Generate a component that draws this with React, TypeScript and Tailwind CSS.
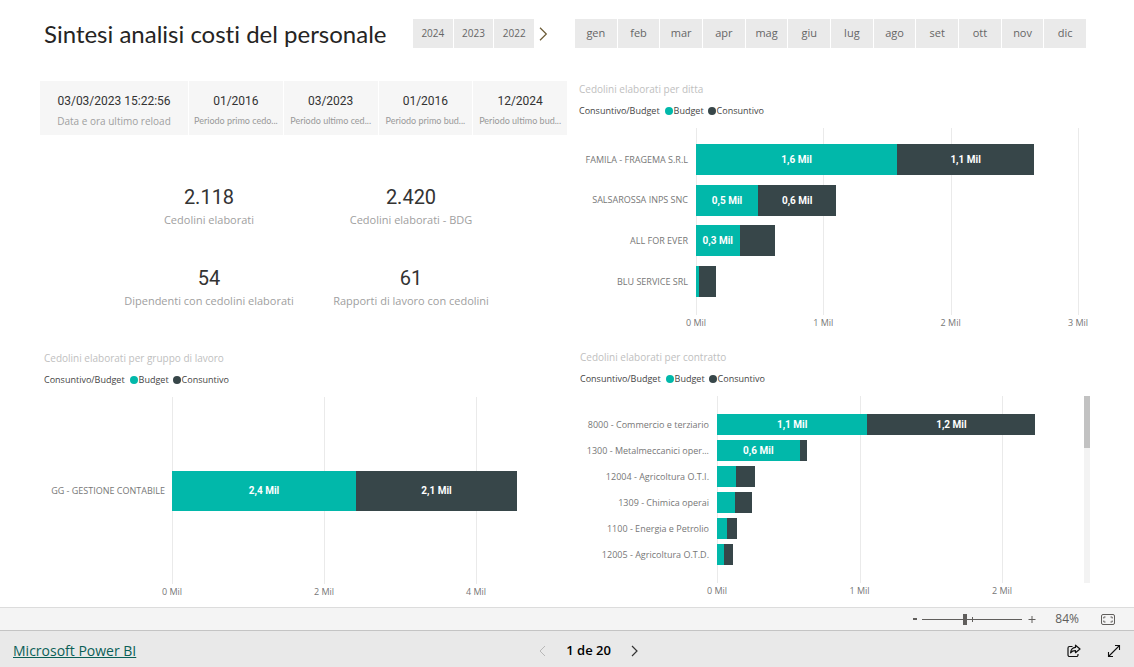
import { useState } from "react";

type Bar = {
  label: string;
  budget: number;
  actual: number;
  budgetText?: string;
  actualText?: string;
};

const YEARS = ["2024", "2023", "2022"];

const MONTHS = [
  "gen",
  "feb",
  "mar",
  "apr",
  "mag",
  "giu",
  "lug",
  "ago",
  "set",
  "ott",
  "nov",
  "dic",
];

const PERIODS = [
  { value: "01/2016", label: "Periodo primo cedo..." },
  { value: "03/2023", label: "Periodo ultimo ced..." },
  { value: "01/2016", label: "Periodo primo bud..." },
  { value: "12/2024", label: "Periodo ultimo bud..." },
];

const KPIS = [
  { value: "2.118", label: "Cedolini elaborati" },
  { value: "2.420", label: "Cedolini elaborati - BDG" },
  { value: "54", label: "Dipendenti con cedolini elaborati" },
  { value: "61", label: "Rapporti di lavoro con cedolini" },
];

const COMPANIES: Bar[] = [
  { label: "FAMILA - FRAGEMA S.R.L", budget: 1.58, actual: 1.075, budgetText: "1,6 Mil", actualText: "1,1 Mil" },
  { label: "SALSAROSSA INPS SNC", budget: 0.487, actual: 0.615, budgetText: "0,5 Mil", actualText: "0,6 Mil" },
  { label: "ALL FOR EVER", budget: 0.342, actual: 0.28, budgetText: "0,3 Mil" },
  { label: "BLU SERVICE SRL", budget: 0.025, actual: 0.135 },
];

const GROUPS: Bar[] = [
  { label: "GG - GESTIONE CONTABILE", budget: 2.42, actual: 2.12, budgetText: "2,4 Mil", actualText: "2,1 Mil" },
];

const CONTRACTS: Bar[] = [
  { label: "8000 - Commercio e terziario", budget: 1.055, actual: 1.18, budgetText: "1,1 Mil", actualText: "1,2 Mil" },
  { label: "1300 - Metalmeccanici oper...", budget: 0.58, actual: 0.055, budgetText: "0,6 Mil" },
  { label: "12004 - Agricoltura O.T.I.", budget: 0.132, actual: 0.135 },
  { label: "1309 - Chimica operai", budget: 0.125, actual: 0.12 },
  { label: "1100 - Energia e Petrolio", budget: 0.07, actual: 0.07 },
  { label: "12005 - Agricoltura O.T.D.", budget: 0.048, actual: 0.067 },
];

function ChartHeading({ title }: { title: string }) {
  return (
    <>
      <h2 className="text-[10px] leading-4 text-[#c0c0c0]">{title}</h2>
      <div className="mt-[6px] flex items-center text-[9px] leading-4 text-[#444]">
        <span className="mr-[5px]">Consuntivo/Budget</span>
        <span className="mr-px size-2 rounded-full bg-[#01b8aa]" />
        <span className="mr-1">Budget</span>
        <span className="mr-px size-2 rounded-full bg-[#374649]" />
        <span>Consuntivo</span>
      </div>
    </>
  );
}

function BarChart({
  bars,
  max,
  ticks,
  labelClass,
  barClass,
  bodyClass,
}: {
  bars: Bar[];
  max: number;
  ticks: number[];
  labelClass: string;
  barClass: string;
  bodyClass: string;
}) {
  return (
    <div className="mt-[9px] flex min-w-0 flex-1 text-[9px] text-[#777]">
      <div className={`flex h-[187px] shrink-0 flex-col ${labelClass} ${bodyClass}`}>
        {bars.map((bar) => (
          <div
            key={bar.label}
            className={`flex items-center justify-end whitespace-nowrap ${barClass}`}
          >
            {bar.label}
          </div>
        ))}
      </div>

      <div className="min-w-0 flex-1">
        <div className={`relative flex h-[187px] flex-col ${bodyClass}`}>
          {ticks.map((tick) => (
            <span
              key={tick}
              className="absolute inset-y-0 w-px bg-[#eaeaea]"
              style={{ left: `${(tick / max) * 100}%` }}
            />
          ))}
          {bars.map((bar) => (
            <div
              key={bar.label}
              className={`relative flex font-[Roboto,sans-serif] text-[10px] font-bold text-white ${barClass}`}
            >
              <div
                className="flex shrink-0 items-center justify-center bg-[#01b8aa]"
                style={{ width: `${(bar.budget / max) * 100}%` }}
              >
                {bar.budgetText}
              </div>
              <div
                className="flex shrink-0 items-center justify-center bg-[#374649]"
                style={{ width: `${(bar.actual / max) * 100}%` }}
              >
                {bar.actualText}
              </div>
            </div>
          ))}
        </div>
        <div className="relative h-4 leading-4">
          {ticks.map((tick) => (
            <span
              key={tick}
              className="absolute -translate-x-1/2 whitespace-nowrap"
              style={{ left: `${(tick / max) * 100}%` }}
            >
              {tick} Mil
            </span>
          ))}
        </div>
      </div>
    </div>
  );
}

export default function App() {
  const [zoom, setZoom] = useState(42);

  return (
    <div className="flex min-h-screen flex-col bg-white font-['Open_Sans','Noto_Sans',sans-serif]">
      <main className="grid flex-1 grid-cols-[minmax(0,527fr)_minmax(0,515fr)] gap-x-2 pt-[19px] pr-11 pb-[7px] pl-10">
        <section>
          <header className="flex h-[29px] items-center justify-between pr-[18px]">
            <h1 className="pl-1 font-[Lato,sans-serif] text-2xl whitespace-nowrap text-[#252423] [font-variant-ligatures:none]">
              Sintesi analisi costi del personale
            </h1>
            <div className="flex items-center gap-[5px]">
              <div className="flex w-[121px] gap-px">
                {YEARS.map((year) => (
                  <button
                    key={year}
                    type="button"
                    className="h-[29px] flex-1 bg-[#eaeaea] text-[10px] text-[#666]"
                  >
                    {year}
                  </button>
                ))}
              </div>
              <button type="button" aria-label="Anni precedenti">
                <svg width="10" height="14" viewBox="0 0 10 14" fill="none" stroke="#6b5a35" strokeWidth="1.2">
                  <path d="M1 0.8 7.300 7 1 13.200" />
                </svg>
              </button>
            </div>
          </header>

          <div className="mt-[33px] flex h-[54px] gap-px text-center">
            <div className="flex w-[148px] flex-col justify-center bg-[#f6f6f6] pt-[6px]">
              <div className="font-[Roboto,sans-serif] text-xs leading-5 text-[#333]">
                03/03/2023 15:22:56
              </div>
              <div className="text-[10px] leading-5 text-[#a0a0a0]">Data e ora ultimo reload</div>
            </div>
            {PERIODS.map((period) => (
              <div
                key={period.label}
                className="flex min-w-0 flex-1 flex-col justify-center bg-[#f6f6f6] pt-[6px]"
              >
                <div className="font-[Roboto,sans-serif] text-xs leading-5 text-[#333]">
                  {period.value}
                </div>
                <div className="font-[Lato,sans-serif] text-[9px] leading-5 whitespace-nowrap text-[#999]">
                  {period.label}
                </div>
              </div>
            ))}
          </div>

          <div className="mt-12 mr-[55px] ml-[68px] grid grid-cols-2 gap-y-9 text-center">
            {KPIS.map((kpi) => (
              <div key={kpi.label}>
                <div className="font-[Roboto,sans-serif] text-xl leading-7 text-[#333]">
                  {kpi.value}
                </div>
                <div className="mt-px text-[11px] leading-4 whitespace-nowrap text-[#a0a0a0]">
                  {kpi.label}
                </div>
              </div>
            ))}
          </div>

          <div className="mt-[41px] pl-1">
            <ChartHeading title="Cedolini elaborati per gruppo di lavoro" />
            <div className="flex pr-[91px]">
              <BarChart
                bars={GROUPS}
                max={4}
                ticks={[0, 2, 4]}
                labelClass="w-32 pr-[7px]"
                barClass="h-10"
                bodyClass="justify-center"
              />
            </div>
          </div>
        </section>

        <section>
          <div className="flex gap-px pr-1">
            {MONTHS.map((month) => (
              <button
                key={month}
                type="button"
                className="h-[29px] flex-1 bg-[#eaeaea] text-[11px] text-[#666]"
              >
                {month}
              </button>
            ))}
          </div>

          <div className="mt-[33px] pl-1">
            <ChartHeading title="Cedolini elaborati per ditta" />
            <div className="flex pr-3">
              <BarChart
                bars={COMPANIES}
                max={3}
                ticks={[0, 1, 2, 3]}
                labelClass="w-[117px] pr-2"
                barClass="h-[31px]"
                bodyClass="justify-between pt-4 pb-[18px]"
              />
            </div>
          </div>

          <div className="mt-[18px] pl-[5px]">
            <ChartHeading title="Cedolini elaborati per contratto" />
            <div className="flex">
              <BarChart
                bars={CONTRACTS}
                max={2}
                ticks={[0, 1, 2]}
                labelClass="w-[137px] pr-2"
                barClass="h-[21px]"
                bodyClass="justify-between py-[18px]"
              />
              <div className="mt-[9px] ml-[82px] h-[187px] w-[6px] bg-[#f3f3f3]">
                <div className="h-[52px] bg-[#c2c2c2]" />
              </div>
            </div>
          </div>
        </section>
      </main>

      <div className="flex h-[23px] items-center justify-end border-t border-[#dcdcdc] bg-[#f4f4f4] pr-[19px] text-[#605e5c]">
        <button type="button" aria-label="Riduci" onClick={() => setZoom(zoom - 5)}>
          <svg width="5" height="12" viewBox="0 0 5 12" stroke="currentColor" strokeWidth="2">
            <path d="M0 6h4" />
          </svg>
        </button>
        <div className="relative mx-1 flex w-[100px] items-center">
          <span className="absolute left-[50px] h-[5px] w-px bg-[#605e5c]" />
          <input
            type="range"
            aria-label="Zoom"
            min={0}
            max={100}
            value={zoom}
            onChange={(e) => setZoom(Number(e.target.value))}
            className="relative h-[11px] w-full appearance-none bg-transparent [&::-webkit-slider-runnable-track]:h-px [&::-webkit-slider-runnable-track]:bg-[#605e5c] [&::-webkit-slider-thumb]:-mt-[5px] [&::-webkit-slider-thumb]:h-[11px] [&::-webkit-slider-thumb]:w-1 [&::-webkit-slider-thumb]:appearance-none [&::-webkit-slider-thumb]:bg-[#605e5c]"
          />
        </div>
        <button type="button" aria-label="Ingrandisci" className="ml-[2px]" onClick={() => setZoom(zoom + 5)}>
          <svg width="8" height="12" viewBox="0 0 8 12" stroke="currentColor">
            <path d="M0.5 6.5h7M4 3v7" />
          </svg>
        </button>
        <span className="mr-[22px] ml-[19px] text-xs">84%</span>
        <button type="button" aria-label="Adatta alla pagina">
          <svg width="14" height="11" viewBox="0 0 14 11" fill="none" stroke="currentColor">
            <rect x="0.5" y="0.5" width="13" height="10" rx="1.5" />
            <path d="M4.5 3H2.8v1.5M2.8 6.5V8h1.7M9.5 3h1.7v1.5M11.2 6.5V8H9.5" />
          </svg>
        </button>
      </div>

      <footer className="flex h-[37px] items-center justify-between border-t border-[#c4c4c4] bg-[#e9e9e9] px-[13px] pt-[3px]">
        <a href="#" className="text-sm text-[#0b5f57] underline">
          Microsoft Power BI
        </a>
        <nav className="flex items-center gap-5">
          <button type="button" aria-label="Pagina precedente" disabled>
            <svg width="7" height="12" viewBox="0 0 7 12" fill="none" stroke="#b8b8b8">
              <path d="M6 1 1 6l5 5" />
            </svg>
          </button>
          <span className="text-[13px] font-semibold text-black">1 de 20</span>
          <button type="button" aria-label="Pagina successiva">
            <svg width="7" height="12" viewBox="0 0 7 12" fill="none" stroke="#333" strokeWidth="1.2">
              <path d="M1 1l5 5-5 5" />
            </svg>
          </button>
        </nav>
        <div className="flex items-center gap-[26px] pl-[26px]">
          <button type="button" aria-label="Condividi">
            <svg width="14" height="14" viewBox="0 0 14 14" fill="none" stroke="#111" strokeWidth="1.2" strokeLinejoin="round">
              <path d="M5.5 2.5h-3A1.5 1.5 0 0 0 1 4v7a1.5 1.5 0 0 0 1.5 1.5h7A1.5 1.5 0 0 0 11 11v-1" />
              <path d="M8.5 1.2 13 5 8.5 8.7V6.6C6.3 6.5 4.8 7.2 3.6 8.8 3.9 5.6 5.7 3.6 8.5 3.4z" />
            </svg>
          </button>
          <button type="button" aria-label="Schermo intero">
            <svg width="14" height="14" viewBox="0 0 14 14" fill="none" stroke="#111" strokeWidth="1.1">
              <path d="M1.5 12.5l11-11M8 1.5h4.5V6M1.5 8v4.5H6" />
            </svg>
          </button>
        </div>
      </footer>
    </div>
  );
}
